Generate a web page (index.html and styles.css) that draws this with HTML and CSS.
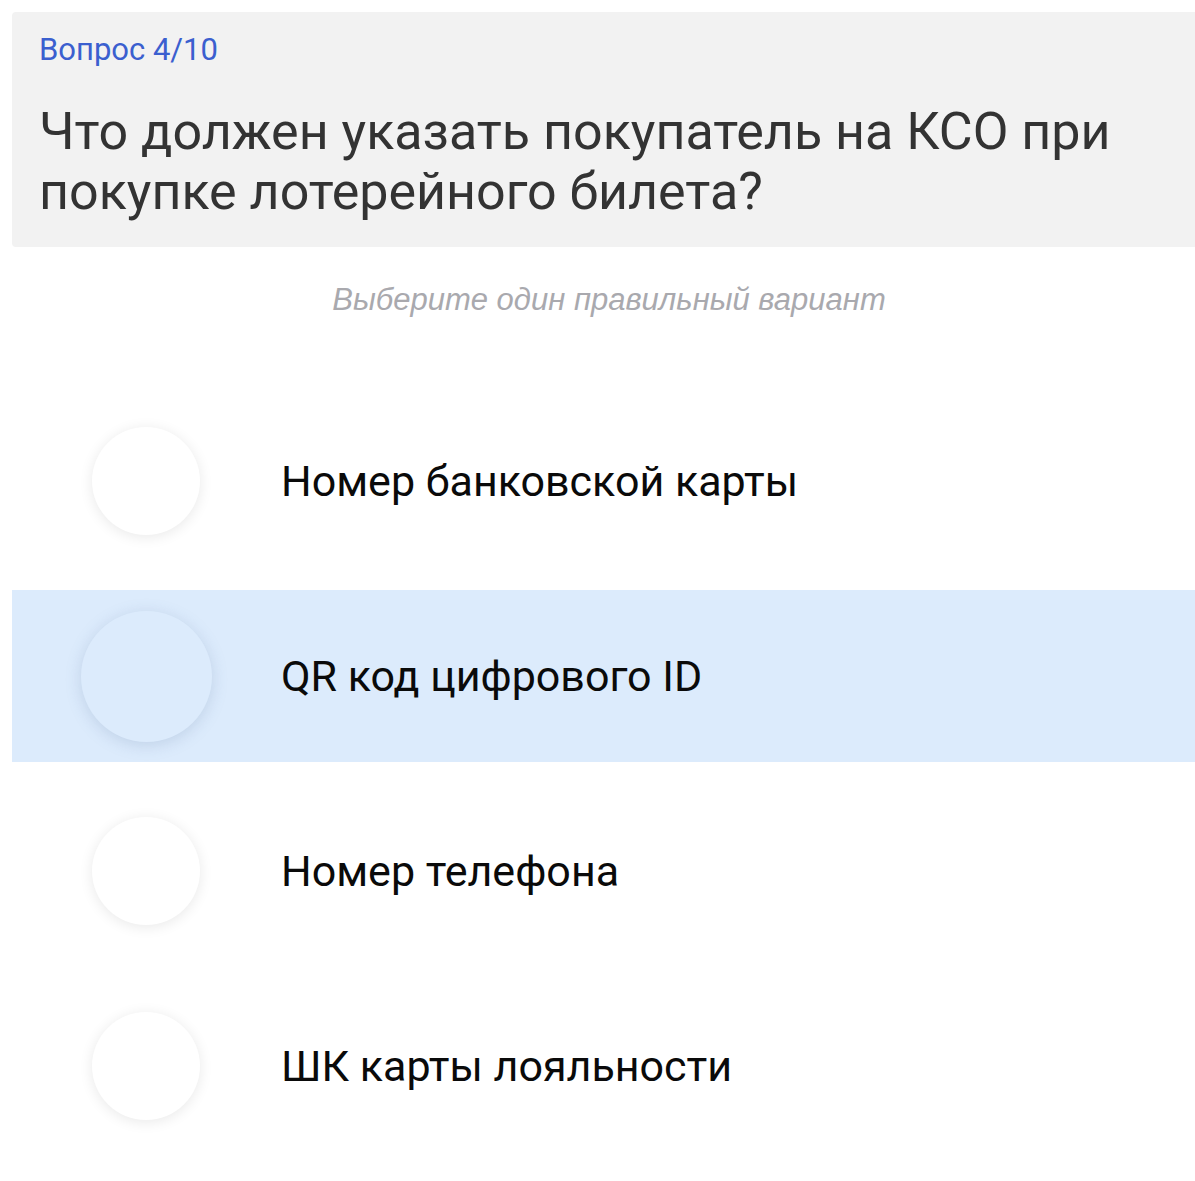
FILE: index.html
```html
<!DOCTYPE html>
<html lang="ru">
<head>
<meta charset="utf-8">
<title>Вопрос 4/10</title>
<link rel="stylesheet" href="styles.css">
</head>
<body>
<div class="page">
  <header class="question-card">
    <div class="counter">Вопрос 4/10</div>
    <h1 class="question">Что должен указать покупатель на КСО при покупке лотерейного билета?</h1>
  </header>
  <p class="hint">Выберите один правильный вариант</p>
  <ul class="options">
    <li class="option"><span class="radio-cell"><span class="radio"></span></span><span class="label">Номер банковской карты</span></li>
    <li class="option selected"><span class="radio-cell"><span class="radio"></span></span><span class="label">QR код цифрового ID</span></li>
    <li class="option"><span class="radio-cell"><span class="radio"></span></span><span class="label">Номер телефона</span></li>
    <li class="option"><span class="radio-cell"><span class="radio"></span></span><span class="label">ШК карты лояльности</span></li>
  </ul>
</div>
</body>
</html>
```

FILE: styles.css
```css
html, body {
  margin: 0;
  padding: 0;
  background: #ffffff;
}
body {
  font-family: Roboto, "Noto Sans", sans-serif;
}
.page {
  padding: 12px 0 0 12px;
  display: flex;
  flex-direction: column;
}
.question-card {
  background: #f2f2f2;
  border-radius: 4px 0 0 4px;
  height: 235px;
  box-sizing: border-box;
  padding: 20px 20px 0 27px;
}
.counter {
  color: #3b5fcf;
  font-size: 31px;
  line-height: 36px;
}
.question {
  margin: 34px 0 0 0;
  font-weight: 400;
  color: #333333;
  font-size: 52px;
  line-height: 60px;
}
.hint {
  margin: 35px 0 0 0;
  padding-left: 11px;
  text-align: center;
  font-family: "Liberation Sans", Arial, sans-serif;
  font-style: italic;
  color: #a9a9ae;
  font-size: 31px;
  line-height: 36px;
}
.options {
  list-style: none;
  margin: 77px 0 0 0;
  padding: 0;
  display: flex;
  flex-direction: column;
  gap: 23px;
}
.option {
  height: 172px;
  display: flex;
  align-items: center;
}
.option.selected {
  background: #dcebfc;
}
.radio-cell {
  width: 160px;
  margin-left: 54px;
  display: flex;
  justify-content: center;
  align-items: center;
}
.radio {
  width: 108px;
  height: 108px;
  border-radius: 50%;
  background: #ffffff;
  box-shadow: 0 2px 14px rgba(0, 0, 0, 0.09);
}
.selected .radio {
  width: 131px;
  height: 131px;
  background: #dcebfc;
  box-shadow: 0 3px 16px rgba(90, 120, 160, 0.22);
}
.label {
  margin-left: 55px;
  font-size: 43px;
  color: #0a0a0a;
}
```
